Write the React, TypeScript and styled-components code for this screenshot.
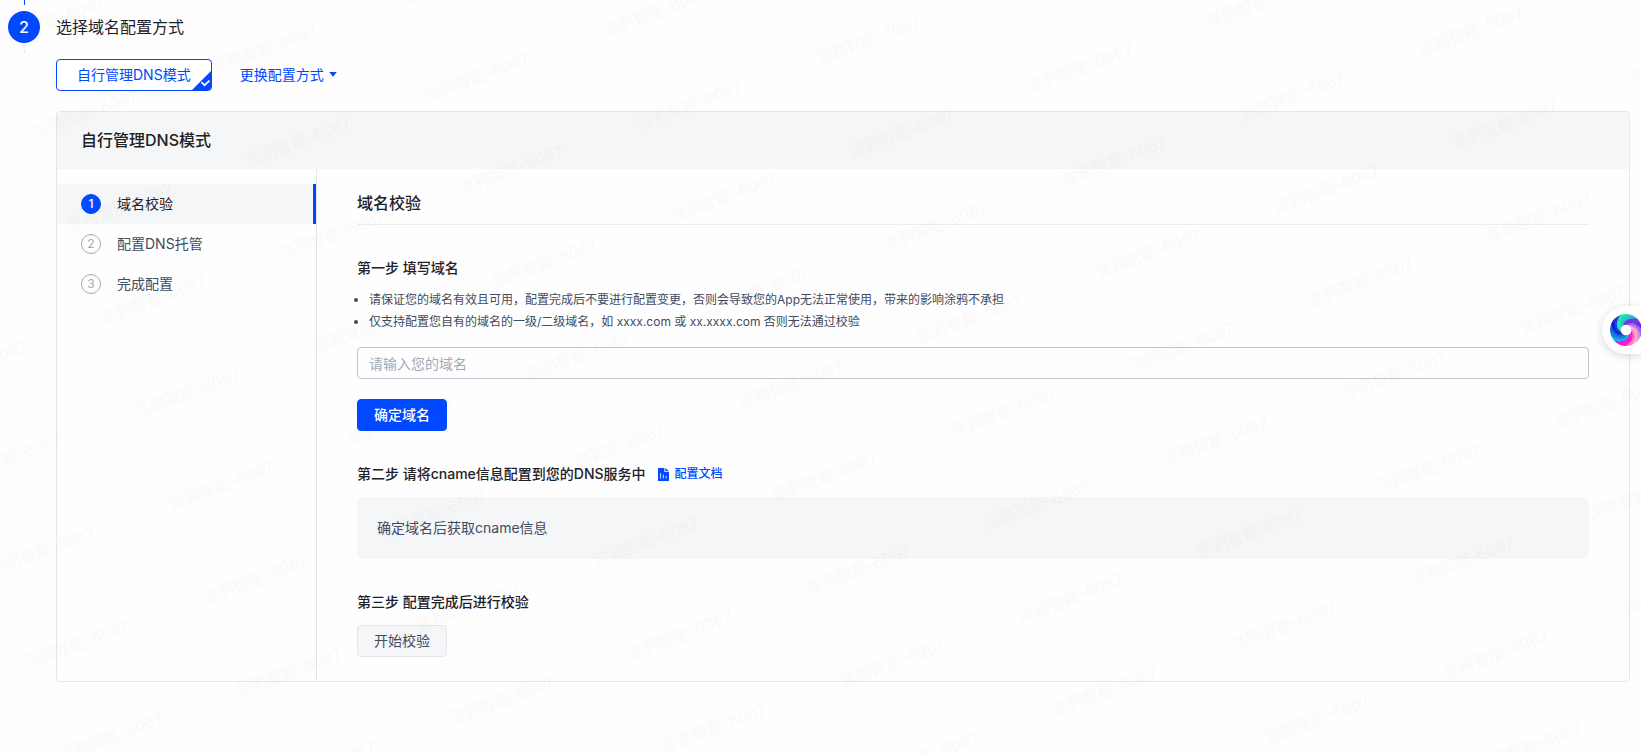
import React from 'react';
import styled, { createGlobalStyle, css } from 'styled-components';

const GlobalStyle = createGlobalStyle`
  *, *::before, *::after { box-sizing: border-box; }
  body {
    margin: 0;
    background: #fefefe;
    color: #1d2129;
    font-family: Inter, "Noto Sans CJK SC", sans-serif;
    font-size: 14px;
    line-height: 22px;
  }
  h2, h3, h4, p, ul, ol { margin: 0; padding: 0; font-weight: 400; }
  button, input { font: inherit; }
`;

const Page = styled.div`
  display: flex;
  gap: 16px;
  min-height: 100vh;
  padding: 0 11px 0 8px;
`;

const StepRail = styled.div`
  display: flex;
  flex: 0 0 32px;
  flex-direction: column;
  align-items: center;
  gap: 6px;
`;

const RailLine = styled.span<{ $done?: boolean }>`
  width: 1px;
  height: ${(p) => (p.$done ? 5 : 4)}px;
  background: ${(p) => (p.$done ? '#0049ff' : '#e5e6eb')};
`;

const StepBadge = styled.span`
  display: flex;
  align-items: center;
  justify-content: center;
  width: 32px;
  height: 32px;
  border-radius: 50%;
  background: #0049ff;
  color: #fff;
  font-size: 16px;
  font-weight: 500;
`;

const Main = styled.main`
  flex: 1;
  min-width: 0;
  padding-top: 15px;
`;

const StepTitle = styled.h2`
  font-size: 16px;
  line-height: 24px;
`;

const ModeBar = styled.div`
  display: flex;
  align-items: center;
  gap: 28px;
  margin: 20px 0;
`;

const ModeButton = styled.button`
  position: relative;
  height: 32px;
  padding: 0 20px;
  border: 1px solid #0049ff;
  border-radius: 4px;
  background: #fff;
  color: #0049ff;
  overflow: hidden;
`;

const Corner = styled.svg`
  position: absolute;
  right: -1px;
  bottom: -1px;
`;

const SwitchButton = styled.button`
  display: flex;
  align-items: center;
  gap: 5px;
  padding: 0;
  border: 0;
  background: none;
  color: #0049ff;
  svg { margin-bottom: 2px; }
`;

const Panel = styled.section`
  border: 1px solid #e5e6eb;
  border-radius: 4px;
  overflow: hidden;
`;

const PanelHeader = styled.h3`
  padding: 16px 24px 17px;
  background: #f5f6f8;
  color: #222;
  font-size: 16px;
  font-weight: 500;
  line-height: 24px;
`;

const PanelBody = styled.div`
  display: flex;
`;

const SideNav = styled.ol`
  flex: 0 0 260px;
  padding-top: 15px;
  border-right: 1px solid #e5e6eb;
  list-style: none;
`;

const NavItem = styled.li<{ $active?: boolean }>`
  display: flex;
  align-items: center;
  gap: 16px;
  height: 40px;
  padding-left: 24px;
  color: #414b61;
  ${(p) =>
    p.$active &&
    css`
      border-right: 3px solid #0049ff;
      background: #f5f6f8;
      color: #222;
    `}
`;

const NavNumber = styled.span<{ $active?: boolean }>`
  display: flex;
  align-items: center;
  justify-content: center;
  width: 20px;
  height: 20px;
  border: 1px solid ${(p) => (p.$active ? '#0049ff' : '#a2a9b8')};
  border-radius: 50%;
  background: ${(p) => (p.$active ? '#0049ff' : 'transparent')};
  color: ${(p) => (p.$active ? '#fff' : '#a2a9b8')};
  font-size: 12px;
  font-weight: ${(p) => (p.$active ? 500 : 400)};
`;

const Content = styled.div`
  flex: 1;
  min-width: 0;
  padding: 22px 40px 24px;
`;

const ContentTitle = styled.h3`
  padding-bottom: 9px;
  border-bottom: 1px solid #ebedf0;
  font-size: 16px;
  font-weight: 500;
  line-height: 24px;
`;

const Step = styled.section`
  margin-top: 32px;
`;

const StepHeading = styled.h4`
  display: flex;
  align-items: center;
  gap: 12px;
  font-weight: 500;
`;

const Notes = styled.ul`
  margin: 10px 0 14px;
  padding-left: 12px;
  color: #414b61;
  font-size: 12px;
`;

const DomainInput = styled.input`
  display: block;
  width: 100%;
  height: 32px;
  margin-bottom: 20px;
  padding: 0 11px;
  border: 1px solid #c0c4d0;
  border-radius: 4px;
  background: transparent;
  color: #414b61;
  &::placeholder { color: #a2a9b8; opacity: 1; }
`;

const ActionButton = styled.button<{ $primary?: boolean }>`
  display: block;
  height: 32px;
  padding: 0 16px;
  border: 1px solid ${(p) => (p.$primary ? '#0049ff' : '#e5e6eb')};
  border-radius: 4px;
  background: ${(p) => (p.$primary ? '#0049ff' : '#f5f6f8')};
  color: ${(p) => (p.$primary ? '#fff' : '#414b61')};
  font-weight: ${(p) => (p.$primary ? 500 : 400)};
`;

const DocLink = styled.a`
  display: flex;
  align-items: center;
  gap: 6px;
  color: #0049ff;
  font-size: 12px;
  text-decoration: none;
`;

const InfoBox = styled.p`
  margin-top: 12px;
  padding: 20px;
  border-radius: 6px;
  background: #f5f6f8;
  color: #414b61;
`;

const StartButton = styled(ActionButton)`
  margin-top: 12px;
`;

const AssistantButton = styled.button`
  position: fixed;
  top: 306px;
  right: 0;
  display: flex;
  align-items: center;
  width: 39px;
  height: 48px;
  padding: 0 0 0 8px;
  border: 0;
  border-radius: 24px 0 0 24px;
  background: #fff;
  box-shadow: 0 2px 10px rgba(0, 0, 0, 0.16);
  svg { flex: none; }
`;

const WatermarkLayer = styled.svg`
  position: fixed;
  inset: 0;
  width: 100%;
  height: 100%;
  pointer-events: none;
`;

const Watermark = () => (
  <WatermarkLayer aria-hidden="true">
    <defs>
      <pattern
        id="watermark"
        width="190"
        height="99"
        patternUnits="userSpaceOnUse"
        patternTransform="translate(36 138) rotate(-20) translate(-4 -60)"
      >
        <text x="4" y="60" fontSize="16" fill="#000" fillOpacity="0.022">
          涂鸦智能-6067
        </text>
      </pattern>
    </defs>
    <rect width="100%" height="100%" fill="url(#watermark)" />
  </WatermarkLayer>
);

const CheckCorner = () => (
  <Corner width="21" height="21" viewBox="0 0 21 21" aria-hidden="true">
    <path d="M21 0V21H0Z" fill="#0049ff" />
    <path d="M10.5 12.2l3 3 5-4.6" fill="none" stroke="#fff" strokeWidth="1.8" />
  </Corner>
);

const Caret = () => (
  <svg width="8" height="5" viewBox="0 0 8 5" aria-hidden="true">
    <path d="M0.2 0h7.6L4 4.8Z" fill="#0049ff" />
  </svg>
);

const DocIcon = () => (
  <svg width="11" height="13" viewBox="0 0 11 13" aria-hidden="true">
    <path d="M0.6 0H6.4V4H11V12.4a.6.6 0 0 1-.6.6H.6a.6.6 0 0 1-.6-.6V.6A.6.6 0 0 1 .6 0Z" fill="#0049ff" />
    <path d="M7.4 0L11 3.2H7.4Z" fill="#0049ff" />
    <path d="M2.6 5v5.5M5.4 6.6v3.9M8.2 8v2.5" stroke="#fff" strokeWidth="0.8" />
  </svg>
);

// Blade colours, clockwise from the top by where each blade meets the rim.
const blades = [
  '#14dcae', '#2fb3d0', '#5b49d6', '#7a22dc', '#a45cf0', '#cf8df2',
  '#ffb3b0', '#ff7ac0', '#ff1cc8', '#f313d6', '#1aa8ee', '#0b86e4',
  '#0a5fe0', '#1616d8', '#1a3ae4', '#22e6a4',
];

const point = (radius: number, degrees: number) => {
  const a = ((degrees - 90) * Math.PI) / 180;
  return `${(radius * Math.cos(a)).toFixed(2)} ${(radius * Math.sin(a)).toFixed(2)}`;
};

const bladePath = (outer: number, span: number) => {
  const inner = outer - 85;
  return [
    `M${point(5, inner)}`,
    `Q${point(13, outer - 55)} ${point(16, outer)}`,
    `A16 16 0 0 1 ${point(16, outer + span)}`,
    `Q${point(13, outer + span - 55)} ${point(5, inner + span)}Z`,
  ].join('');
};

const Swirl = () => {
  const span = 360 / blades.length;
  return (
    <svg width="32" height="32" viewBox="-16 -16 32 32" aria-hidden="true">
      {blades.map((color, i) => (
        <path key={color} d={bladePath(i * span, span + 3)} fill={color} />
      ))}
      <circle r="5.3" fill="#fff" />
    </svg>
  );
};

const navItems = ['域名校验', '配置DNS托管', '完成配置'];

export default function App() {
  return (
    <>
      <GlobalStyle />
      <Page>
        <StepRail>
          <RailLine $done />
          <StepBadge>2</StepBadge>
          <RailLine />
        </StepRail>
        <Main>
          <StepTitle>选择域名配置方式</StepTitle>
          <ModeBar>
            <ModeButton type="button">
              自行管理DNS模式
              <CheckCorner />
            </ModeButton>
            <SwitchButton type="button">
              更换配置方式
              <Caret />
            </SwitchButton>
          </ModeBar>
          <Panel>
            <PanelHeader>自行管理DNS模式</PanelHeader>
            <PanelBody>
              <SideNav>
                {navItems.map((label, i) => (
                  <NavItem key={label} $active={i === 0}>
                    <NavNumber $active={i === 0}>{i + 1}</NavNumber>
                    {label}
                  </NavItem>
                ))}
              </SideNav>
              <Content>
                <ContentTitle>域名校验</ContentTitle>
                <Step>
                  <StepHeading>
                    <label htmlFor="domain">第一步 填写域名</label>
                  </StepHeading>
                  <Notes>
                    <li>请保证您的域名有效且可用，配置完成后不要进行配置变更，否则会导致您的App无法正常使用，带来的影响涂鸦不承担</li>
                    <li>仅支持配置您自有的域名的一级/二级域名，如 xxxx.com 或 xx.xxxx.com 否则无法通过校验</li>
                  </Notes>
                  <DomainInput id="domain" type="text" placeholder="请输入您的域名" />
                  <ActionButton type="button" $primary>
                    确定域名
                  </ActionButton>
                </Step>
                <Step>
                  <StepHeading>
                    第二步 请将cname信息配置到您的DNS服务中
                    <DocLink href="#doc">
                      <DocIcon />
                      配置文档
                    </DocLink>
                  </StepHeading>
                  <InfoBox>确定域名后获取cname信息</InfoBox>
                </Step>
                <Step>
                  <StepHeading>第三步 配置完成后进行校验</StepHeading>
                  <StartButton type="button">开始校验</StartButton>
                </Step>
              </Content>
            </PanelBody>
          </Panel>
        </Main>
      </Page>
      <AssistantButton type="button" aria-label="智能助手">
        <Swirl />
      </AssistantButton>
      <Watermark />
    </>
  );
}
